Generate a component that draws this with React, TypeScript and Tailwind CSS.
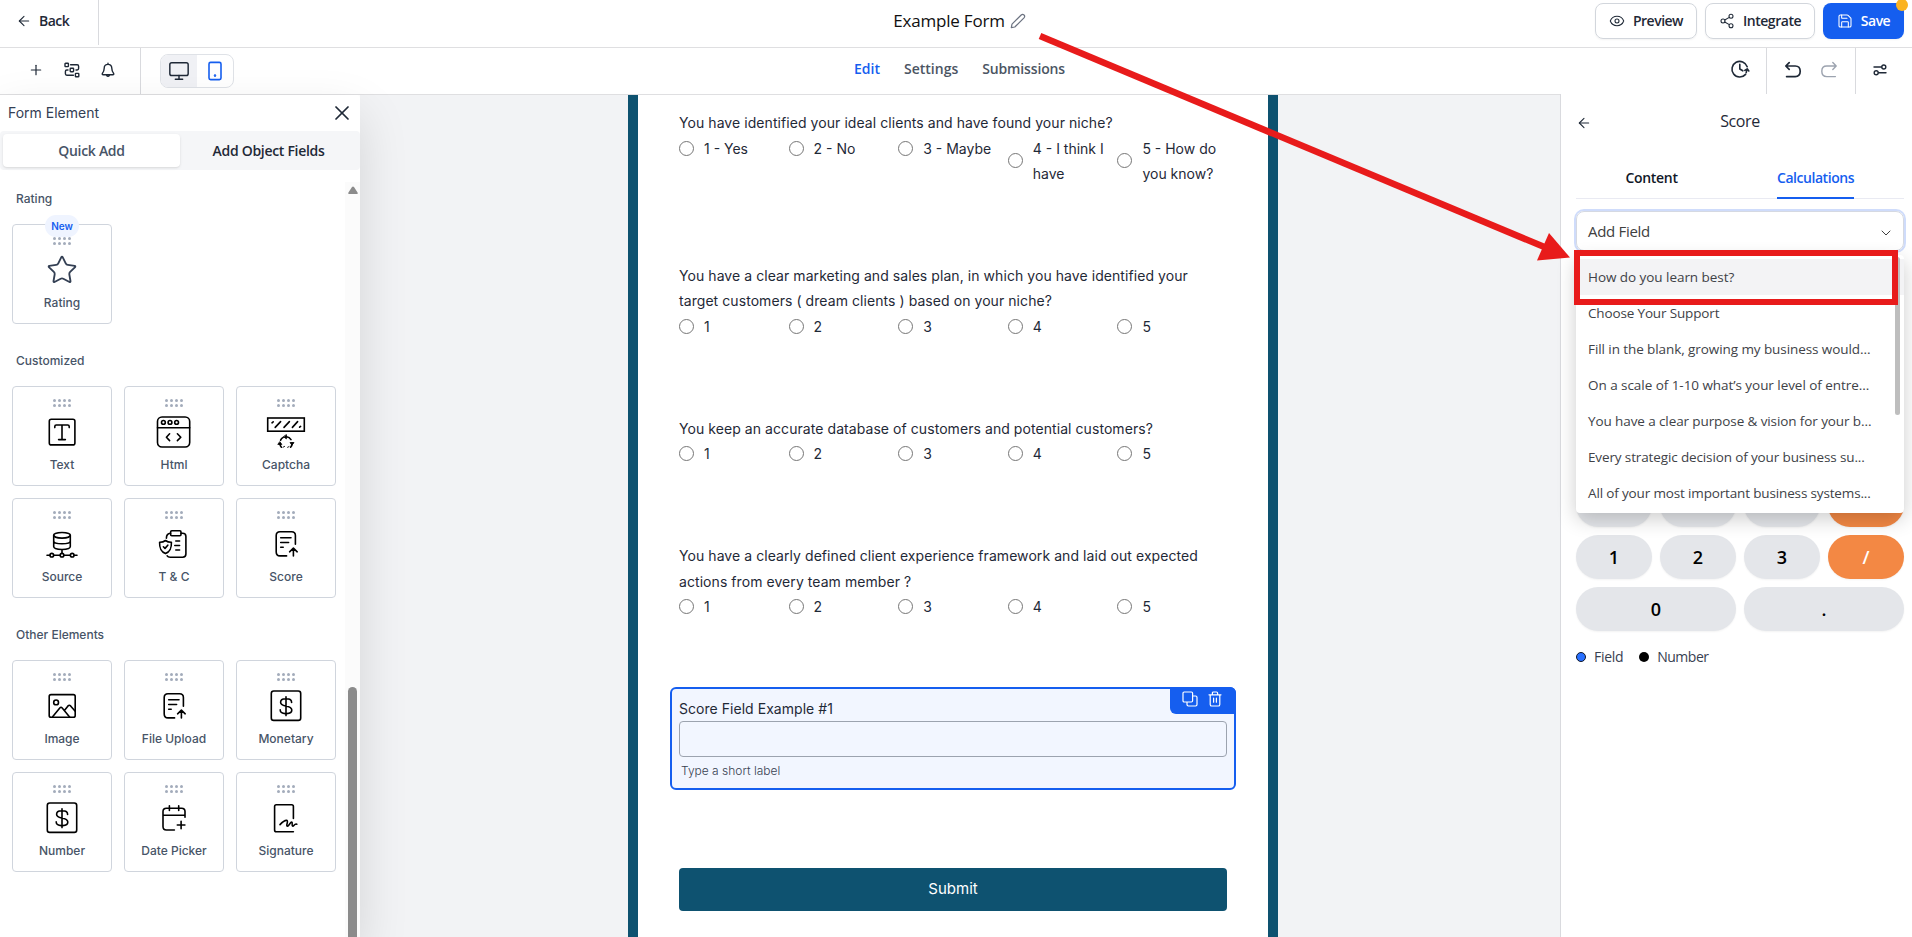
import React from 'react';
import { ArrowLeft, Eye, Monitor, Plus, Save, Share2, Star, X, ChevronDown } from 'lucide-react';

interface ElementItem {
	label: string;
	icon: React.ReactNode;
	isNew?: boolean;
}

// Shared frame for the 40x40 tile drawings
const TileIcon: React.FC<{ children: React.ReactNode }> = ({ children }) => (
	<svg
		className="w-10 h-10"
		viewBox="0 0 40 40"
		fill="none"
		stroke="#000"
		strokeWidth="1.6"
		strokeLinecap="round"
		strokeLinejoin="round"
	>
		{children}
	</svg>
);

const TextIcon = () => (
	<TileIcon>
		<rect x="7.3" y="7.3" width="25.6" height="25.6" rx="2" />
		<path d="M12.8 15.6V14.5Q12.8 13 14.3 13H25.7Q27.2 13 27.2 14.5V15.6M20 13V27.6M16.6 27.6H23.4" />
	</TileIcon>
);

const HtmlIcon = () => (
	<TileIcon>
		<rect x="3.5" y="5" width="32.2" height="30" rx="4.5" />
		<path d="M3.5 15.8H35.7M15.6 21.8L12.4 25.2L15.6 28.6M23.4 21.8L26.8 25.2L23.4 28.6" />
		<circle cx="9.4" cy="10.4" r="1.9" />
		<circle cx="16" cy="10.4" r="1.9" />
		<circle cx="22.6" cy="10.4" r="1.9" />
	</TileIcon>
);

const CaptchaIcon = () => (
	<TileIcon>
		<rect x="1.7" y="6" width="36.6" height="13.2" strokeLinejoin="miter" />
		<path d="M6 10.8L7.2 9.8M9.2 15.4L14.6 9.6M18 15.4L23.4 9.6M26.4 15.4L31.6 9.6M33.6 15.2L34.6 14.4" />
		<path d="M14.6 28.2A6 6 0 0 1 17.2 25.4M20.6 24.8A6 6 0 0 1 25 27.6M26.2 31.2A6 6 0 0 1 24.6 35.2M15.4 35.2A6 6 0 0 1 13.9 31.6" />
		<path d="M20.4 23V26.8L17.8 24.9ZM24.4 30.6H28L26.2 32.8ZM12.2 32.4H15.8L14 30ZM17 35.2L18.6 34.4M21.6 35.3L23 34.6" fill="#000" strokeWidth="0.9" />
	</TileIcon>
);

const SourceIcon = () => (
	<TileIcon>
		<ellipse cx="20" cy="11.3" rx="8.3" ry="2.8" />
		<path d="M11.7 11.3V22.6C11.7 24.3 15.4 25.5 20 25.5S28.3 24.3 28.3 22.6V11.3M11.7 17C11.7 18.7 15.4 19.8 20 19.8S28.3 18.7 28.3 17M20 25.5V29M5 31.2H7.8M11.8 31.2H18M22 31.2H28.2M32.2 31.2H35" />
		<circle cx="9.8" cy="31.2" r="1.8" />
		<circle cx="20" cy="31.2" r="1.8" />
		<circle cx="30.2" cy="31.2" r="1.8" />
	</TileIcon>
);

const TermsIcon = () => (
	<TileIcon>
		<rect x="16.6" y="6.8" width="10.4" height="5" rx="1.2" />
		<path d="M27 9.3H28.6Q31.9 9.3 31.9 12.5V30Q31.9 33.2 28.6 33.2H16.2Q14 33.2 13.2 31.8M16.6 9.3Q12.4 9.6 12.4 14.2" />
		<path d="M11.5 16.5Q14 18.3 17.4 18.2C17.6 23.5 16.8 27.2 11.5 29.6C6.2 27.2 5.4 23.5 5.6 18.2Q9 18.3 11.5 16.5Z" />
		<path d="M9.4 22.8L11 24.4L13.8 21.2M21.8 17H25.6M20.8 21.5H25.6M21.8 26H25.6" />
	</TileIcon>
);

const DocUploadIcon = () => (
	<TileIcon>
		<path d="M29.4 20.2V11.6Q29.4 7.8 25.6 7.8H14Q10.2 7.8 10.2 11.6V28Q10.2 31.9 14 31.9H20.6" />
		<path d="M14.7 13.8H25M14.7 18.5H22.6M14.7 23.3H17.2M27.4 32V24.6M23.6 27.8L27.4 24.2L31.2 27.8" />
	</TileIcon>
);

const ImageIcon = () => (
	<TileIcon>
		<rect x="7.2" y="8.6" width="26" height="22.6" rx="1.8" />
		<circle cx="14.1" cy="16.4" r="2.4" />
		<path d="M10.6 30.8L17.8 22Q19 20.6 20.2 22L27.6 31M22.8 24L26 19.9Q27.3 18.6 28.6 19.9L33 25" />
	</TileIcon>
);

const DollarIcon = () => (
	<TileIcon>
		<rect x="5.3" y="5" width="29.4" height="29.4" rx="2.4" />
		<path d="M20 10.8V29.6M25.6 16.4C25.6 13.9 23.4 12.8 20.6 12.8H19.4C16.6 12.8 14.6 14.2 14.6 16.3C14.6 18.6 16.6 19.4 19.6 20C23.2 20.7 25.8 21.4 25.8 24C25.8 26.2 23.6 27.6 20.8 27.6H19.2C16.4 27.6 14.2 26.4 14.2 23.9" />
	</TileIcon>
);

const DateIcon = () => (
	<TileIcon>
		<path d="M31 19.2V13.6Q31 10.2 27.6 10.2H12.4Q9 10.2 9 13.6V28.6Q9 32 12.4 32H20.4M9 17.3H31M15.4 7.8V12.4M24.7 7.8V12.4M27.1 23.2V30.8M23.3 27H30.9" />
	</TileIcon>
);

const SignatureIcon = () => (
	<TileIcon>
		<path d="M27.4 20.4V8.4Q27.4 6.7 25.7 6.7H10.3Q8.6 6.7 8.6 8.4V32Q8.6 33.8 10.3 33.8H27.4" />
		<path d="M14 26.6C16 24.4 19 22 21 22.4C22.6 23 19.6 28 21.4 28.2C23 28.2 24.4 23.6 25.8 24C27 24.4 25.2 27.8 26.8 28.2C28 28.2 28.6 25.2 30.8 26.2" />
	</TileIcon>
);

const sections: { title: string; items: ElementItem[] }[] = [
	{
		title: 'Rating',
		items: [
			{
				label: 'Rating',
				icon: <Star className="w-10 h-10 p-[4px] text-[#344054]" strokeWidth={1.4} />,
				isNew: true,
			},
		],
	},
	{
		title: 'Customized',
		items: [
			{ label: 'Text', icon: <TextIcon /> },
			{ label: 'Html', icon: <HtmlIcon /> },
			{ label: 'Captcha', icon: <CaptchaIcon /> },
			{ label: 'Source', icon: <SourceIcon /> },
			{ label: 'T & C', icon: <TermsIcon /> },
			{ label: 'Score', icon: <DocUploadIcon /> },
		],
	},
	{
		title: 'Other Elements',
		items: [
			{ label: 'Image', icon: <ImageIcon /> },
			{ label: 'File Upload', icon: <DocUploadIcon /> },
			{ label: 'Monetary', icon: <DollarIcon /> },
			{ label: 'Number', icon: <DollarIcon /> },
			{ label: 'Date Picker', icon: <DateIcon /> },
			{ label: 'Signature', icon: <SignatureIcon /> },
		],
	},
];

const questions = [
	{
		text: 'You have identified your ideal clients and have found your niche?',
		options: ['1 - Yes', '2 - No', '3 - Maybe', '4 - I think I have', '5 - How do you know?'],
	},
	{
		text: 'You have a clear marketing and sales plan, in which you have identified your target customers ( dream clients ) based on your niche?',
		options: ['1', '2', '3', '4', '5'],
	},
	{
		text: 'You keep an accurate database of customers and potential customers?',
		options: ['1', '2', '3', '4', '5'],
	},
	{
		text: 'You have a clearly defined client experience framework and laid out expected actions from every team member ?',
		options: ['1', '2', '3', '4', '5'],
	},
];

const fieldOptions = [
	{ text: 'How do you learn best?', tracking: 'tracking-[-0.05px]' },
	{ text: 'Choose Your Support', tracking: 'tracking-[-0.15px]' },
	{ text: 'Fill in the blank, growing my business would...', tracking: 'tracking-[-0.08px]' },
	{ text: 'On a scale of 1-10 what’s your level of entre...', tracking: 'tracking-[-0.05px]' },
	{ text: 'You have a clear purpose & vision for your b...', tracking: 'tracking-[-0.1px]' },
	{ text: 'Every strategic decision of your business su...', tracking: 'tracking-[-0.13px]' },
	{ text: 'All of your most important business systems...', tracking: 'tracking-[-0.15px]' },
];

const Header = () => (
	<header className="shrink-0">
		<div className="h-12 flex border-b border-[#dfdfe1]">
			<div className="w-[636px] flex items-start">
				<div className="w-[99px] h-[45px] border-r border-[#d9dade] flex items-center pl-4 pb-[4px] text-[#1f2937]">
					<ArrowLeft className="w-4 h-4" strokeWidth={1.6} />
					<span className="ml-[7px] text-sm font-semibold tracking-[-0.5px]">Back</span>
				</div>
			</div>
			<div className="flex-1 flex items-center justify-center pl-[7px] pb-[5px]">
				<h1 className="text-[17px] text-[#101010] tracking-[-0.2px]">Example Form</h1>
				<svg className="w-4 h-4 ml-[5px]" viewBox="0 0 16 16" fill="none" stroke="#6b7280" strokeWidth="1.2" strokeLinejoin="round">
					<path d="M1.3 14.7L2 11.2L11.2 2Q12.6 .8 14 2T14 4.8L4.8 14L1.3 14.7Z" />
				</svg>
			</div>
			<div className="w-[636px] flex justify-end gap-2 pt-[3px] pr-2 text-sm font-semibold text-[#1f2937]">
				<button className="w-[102px] h-9 rounded-lg border border-[#d2d6dc] shadow-xs flex items-center justify-center gap-2">
					<Eye className="w-4 h-4" strokeWidth={1.6} />
					<span className="tracking-[-0.5px]">Preview</span>
				</button>
				<button className="w-[110px] h-9 rounded-lg border border-[#d2d6dc] shadow-xs flex items-center justify-center gap-2">
					<Share2 className="w-4 h-4" strokeWidth={1.6} />
					<span className="tracking-[-0.45px]">Integrate</span>
				</button>
				<button className="relative w-[81px] h-9 rounded-lg bg-[#155eef] text-white shadow-xs flex items-center justify-center gap-2">
					<Save className="w-4 h-4" strokeWidth={1.6} />
					<span className="tracking-[-0.5px]">Save</span>
					<span className="absolute -top-1 -right-[4px] w-3 h-3 rounded-full bg-[#fbb321]"></span>
				</button>
			</div>
		</div>

		<div className="h-[47px] flex border-b border-[#dfdfe1] text-[#1f2937]">
			<div className="w-[141px] border-r border-[#d9dade] flex items-center pl-7 pb-[2px]">
				<Plus className="w-4 h-4" strokeWidth={1.8} />
				<svg className="w-4 h-4 ml-5" viewBox="0 0 16 16" fill="none" stroke="currentColor" strokeWidth="1.4">
					<rect x="1" y="1.2" width="3.4" height="3.4" rx=".6" />
					<rect x="6.2" y="6.3" width="3.4" height="3.4" rx=".6" />
					<rect x="11.4" y="11.4" width="3.4" height="3.4" rx=".6" />
					<path d="M6.6 2.8H13.2Q14.6 2.8 14.6 4.2V6.6Q14.6 8 13.2 8H12M9.4 13.2H2.8Q1.4 13.2 1.4 11.8V9.4Q1.4 8 2.8 8H4" strokeLinecap="round" />
				</svg>
				<svg className="w-4 h-4 ml-5" viewBox="0 0 16 16" fill="none" stroke="currentColor" strokeWidth="1.4" strokeLinecap="round" strokeLinejoin="round">
					<path d="M8 2.4C5.4 2.4 4.2 4.2 4.2 6.2C4.2 8.6 3.4 10 2.4 11.4Q1.8 12.8 3.2 12.8H12.8Q14.2 12.8 13.6 11.4C12.6 10 11.8 8.6 11.8 6.2C11.8 4.2 10.6 2.4 8 2.4ZM8 2.3V1.2M6.4 13.2Q8 15.6 9.6 13.2" />
				</svg>
			</div>
			<div className="w-[495px] flex items-start pl-[19px] pt-[6px]">
				<div className="w-[74px] h-[34px] rounded-lg border border-[#dfe2e7] flex overflow-hidden">
					<div className="w-9 bg-[#f0f1f5] flex items-center justify-center">
						<Monitor className="w-[22px] h-[22px]" strokeWidth={1.6} />
					</div>
					<div className="flex-1 flex items-center justify-center text-[#155eef]">
						<svg className="w-5 h-5" viewBox="0 0 20 20" fill="none" stroke="currentColor" strokeWidth="1.6">
							<rect x="4" y="1.4" width="12" height="17.2" rx="1.6" />
							<circle cx="10" cy="14.6" r=".5" fill="currentColor" />
						</svg>
					</div>
				</div>
			</div>
			<nav className="flex-1 flex items-center justify-center gap-6 pb-[4px] pl-[7px] text-sm font-semibold text-[#4b5563]">
				<span className="text-[#155eef]">Edit</span>
				<span>Settings</span>
				<span className="tracking-[-0.15px]">Submissions</span>
			</nav>
			<div className="w-[636px] h-[46px] flex justify-end">
				<div className="w-[36px] h-full flex items-center pb-1">
					<svg className="w-5 h-5" viewBox="0 0 20 20" fill="none" stroke="currentColor" strokeWidth="1.6" strokeLinecap="round" strokeLinejoin="round">
						<path d="M17.2 7.8A7.8 7.8 0 1 0 15.6 15.4M9.8 5.4V10L12.8 11.8M14.8 11.4L17.2 9.8L18.8 12M17 10L16.2 13.6" />
					</svg>
				</div>
				<div className="w-[89px] h-full border-l border-[#d9dade] flex items-center pl-[17px] gap-[18px] pb-[3px]">
					<svg className="w-[18px] h-[18px]" viewBox="0 0 18 18" fill="none" stroke="currentColor" strokeWidth="1.7" strokeLinecap="round" strokeLinejoin="round">
						<path d="M5.2 1.6L1.8 5L5.2 8.4M2 5H11.2Q16.2 5 16.2 10.2T11.2 15.6H2.6" />
					</svg>
					<svg className="w-[18px] h-[18px]" viewBox="0 0 18 18" fill="none" stroke="#9ca3af" strokeWidth="1.4" strokeLinecap="round" strokeLinejoin="round">
						<path d="M12.8 1.6L16.2 5L12.8 8.4M16 5H6.8Q1.8 5 1.8 10.2T6.8 15.6H15.4" />
					</svg>
				</div>
				<div className="w-[57px] h-full border-l border-[#d9dade] flex items-center pl-[16px] pb-[2px]">
					<svg className="w-4 h-4" viewBox="0 0 16 16" fill="none" stroke="currentColor" strokeWidth="1.4" strokeLinecap="round">
						<path d="M2 5H9.6M6.6 10.8H14" />
						<circle cx="11.8" cy="5" r="2" />
						<circle cx="4.2" cy="10.8" r="2" />
					</svg>
				</div>
			</div>
		</div>
	</header>
);

const ElementTile: React.FC<{ item: ElementItem }> = ({ item }) => (
	<div className="relative w-[100px] h-[100px] rounded border border-[#d0d5dd] flex flex-col items-center">
		{item.isNew && (
			<span className="absolute -top-[10px] left-1/2 -translate-x-1/2 w-[34px] h-[22px] rounded-full bg-[#eff4ff] text-[#155eef] text-[10px] font-semibold flex items-center justify-center">
				New
			</span>
		)}
		<div className="mt-[12px] grid grid-cols-4 gap-x-[2px] gap-y-[2px]">
			{Array.from({ length: 8 }, (_, i) => (
				<span key={i} className="w-[3px] h-[3px] rounded-full bg-[#a3acbb]"></span>
			))}
		</div>
		<div className="mt-[5px]">{item.icon}</div>
		<span className="mt-[5px] text-xs font-medium leading-4 text-[#475467]">{item.label}</span>
	</div>
);

const ElementPanel = () => (
	<aside className="relative z-10 w-[360px] shrink-0 bg-white rounded-tr shadow-[0_20px_50px_rgba(0,0,0,0.13)] flex flex-col font-['Inter',sans-serif]">
		<div className="h-9 shrink-0 flex items-center justify-between pl-2 pr-[6px]">
			<span className="text-sm text-[#344054]">Form Element</span>
			<X className="w-6 h-6 text-[#1f2937]" strokeWidth={1.7} />
		</div>
		<div className="h-[39px] shrink-0 bg-[#f5f6f8] rounded flex items-center pl-[3px] text-sm font-semibold font-['Open_Sans','Noto_Sans',sans-serif]">
			<div className="w-[177px] h-[33px] rounded bg-white shadow-sm flex items-center justify-center text-[#475467] tracking-[-0.3px]">
				Quick Add
			</div>
			<div className="flex-1 pr-[3px] text-center text-[#1f2937] tracking-[-0.3px]">Add Object Fields</div>
		</div>
		<div className="flex-1 min-h-0 flex mt-3">
			<div className="flex-1 overflow-hidden pl-3 pt-[9px]">
				{sections.map((section) => (
					<section key={section.title} className="mb-[29px]">
						<h2 className="pl-1 text-xs font-medium leading-4 text-[#475467]">{section.title}</h2>
						<div className="mt-[17px] grid grid-cols-[100px_100px_100px] gap-3">
							{section.items.map((item) => (
								<ElementTile key={item.label} item={item} />
							))}
						</div>
					</section>
				))}
			</div>
			<div className="w-[15px] bg-[#fbfbfb] flex flex-col items-center pt-[4px]">
				<svg className="w-[10px] h-2" viewBox="0 0 10 8" fill="#8b8b8b">
					<path d="M.8 8Q-.2 7.4 .6 6.2L4 1Q5 -.2 6 1L9.4 6.2Q10.2 7.4 9.2 8Z" />
				</svg>
				<div className="mt-[493px] w-[9px] flex-1 rounded-t-full bg-[#8b8b8b]"></div>
			</div>
		</div>
	</aside>
);

const FormCanvas = () => (
	<main className="flex-1 bg-[#f2f3f5] flex justify-center pr-[14px] font-['Inter',sans-serif] text-[#1f2937]">
		<div className="w-[650px] bg-white border-x-10 border-[#0e5270] px-[41px] pt-[15.4px]">
			{questions.map((q) => (
				<div key={q.text} className="mb-[77.1px] text-sm leading-[25.2px]">
					<p className="tracking-[0.065px]">{q.text}</p>
					<div className="grid grid-cols-5">
						{q.options.map((option) => (
							<label key={option} className="flex items-center self-start">
								<span className="w-[15px] h-[15px] shrink-0 rounded-full border border-[#767676]"></span>
								<span className="ml-[10px]">{option}</span>
							</label>
						))}
					</div>
				</div>
			))}

			<div className="relative -mt-[9px] -mx-[9px] h-[103px] rounded-md border-2 border-[#155eef] bg-[#f2f6ff] px-[7px] pt-[10px]">
				<p className="text-sm leading-5 tracking-[0.04px]">Score Field Example #1</p>
				<div className="mt-[2px] h-9 rounded border border-[#9ca3af]"></div>
				<p className="mt-[6px] pl-[2px] text-xs font-light leading-4 text-[#374151]">Type a short label</p>
				<div className="absolute -top-[2px] -right-[2px] w-[66px] h-[27px] rounded-tr-md rounded-bl-md bg-[#155eef] flex items-start pt-1 pl-3 gap-[9px]">
					<svg className="w-4 h-4" viewBox="0 0 16 16" fill="none" stroke="#fff" strokeWidth="1.2" strokeLinejoin="round">
						<rect x="1" y="1" width="9.6" height="10" rx="1.2" />
						<path d="M5 11V13.6Q5 15 6.4 15H13.6Q15 15 15 13.6V6.4Q15 5 13.6 5H10.6" />
					</svg>
					<svg className="w-4 h-4" viewBox="0 0 16 16" fill="none" stroke="#fff" strokeWidth="1.2" strokeLinecap="round" strokeLinejoin="round">
						<path d="M2 3.8H14M5.4 3.6V2Q5.4 1 6.4 1H9.6Q10.6 1 10.6 2V3.6M3.2 4V13.4Q3.2 15 4.8 15H11.2Q12.8 15 12.8 13.4V4M6.6 7.2V11.2M9.4 7.2V11.2" />
					</svg>
				</div>
			</div>

			<button className="mt-[78px] w-full h-[43px] rounded bg-[#0e5270] text-[15px] text-white">Submit</button>
		</div>
	</main>
);

const keyClass = 'h-11 rounded-full bg-[#e4e6ea] shadow-xs flex items-center justify-center';

const ScorePanel = () => (
	<aside className="relative w-[352px] shrink-0 -mt-px pt-px bg-white border-l border-[#d9dade] px-[15px] pr-2">
		<div className="h-[57px] flex items-center text-[#1f2937]">
			<ArrowLeft className="w-4 h-4 mb-[2px]" strokeWidth={1.6} />
			<h2 className="flex-1 text-center pr-4 pb-[5px] text-base tracking-[-0.4px]">Score</h2>
		</div>
		<div className="h-[47px] flex border-b border-[#e9eaf2] text-sm font-semibold">
			<div className="w-[151px] flex justify-center items-end pb-[10px] text-[#111827] tracking-[-0.3px]">Content</div>
			<div className="flex-1 flex justify-center">
				<div className="-mb-px w-[77px] flex justify-center items-end pb-[9px] border-b-2 border-[#155eef] text-[#155eef] tracking-[-0.45px]">
					Calculations
				</div>
			</div>
		</div>

		<div className="relative mt-3">
			<div className="h-10 rounded-lg border border-[#d5d9e2] ring-2 ring-[#cfdcfb] flex items-center justify-between pl-[11px] pr-[9px] text-[#404040]">
				<span className="text-[15px] tracking-[-0.3px]">Add Field</span>
				<ChevronDown className="w-4 h-4 mt-1" strokeWidth={1.5} />
			</div>

			{/* Options list */}
			<div className="absolute z-10 top-[44px] left-0 w-full h-[258px] rounded bg-white shadow-[0_6px_20px_rgba(0,0,0,0.2)] pt-1 overflow-hidden">
				{fieldOptions.map((option, i) => (
					<div
						key={option.text}
						className={
							i === 0
								? 'h-9 flex items-center pl-3 pr-8 bg-[#f3f3f5] text-[13.5px] text-[#404247] whitespace-nowrap'
								: 'h-9 flex items-center pl-3 pr-8 text-[13.5px] text-[#404247] whitespace-nowrap'
						}
					>
						<span className={option.tracking}>{option.text}</span>
					</div>
				))}
				<div className="absolute top-[2px] right-1 w-[5px] h-[158px] rounded-full bg-[#bebebe]"></div>
			</div>

			{/* Highlight around the first option */}
			<div className="absolute z-20 top-[39px] -left-[2px] w-[324px] h-[55px] border-6 border-[#e81b1b]"></div>
		</div>

		<div className="mt-[232px] grid grid-cols-4 gap-2 text-lg font-semibold text-black">
			{/* Row tucked under the open list */}
			<div className={keyClass}></div>
			<div className={keyClass}></div>
			<div className={keyClass}></div>
			<div className="h-11 rounded-full bg-[#f38844] shadow-xs"></div>
			<div className={keyClass}>1</div>
			<div className={keyClass}>2</div>
			<div className={keyClass}>3</div>
			<div className="h-11 rounded-full bg-[#f38844] text-white shadow-xs flex items-center justify-center">/</div>
			<div className="col-span-2 h-11 rounded-full bg-[#e4e6ea] shadow-xs flex items-center justify-center">0</div>
			<div className="col-span-2 h-11 rounded-full bg-[#e4e6ea] shadow-xs flex items-center justify-center">.</div>
		</div>

		<div className="mt-4 flex items-center text-sm text-[#374151]">
			<span className="w-[10px] h-[10px] rounded-full bg-[#2970ff] border border-[#111827]"></span>
			<span className="ml-2 tracking-[-0.3px]">Field</span>
			<span className="ml-4 w-[10px] h-[10px] rounded-full bg-black"></span>
			<span className="ml-2 tracking-[-0.5px]">Number</span>
		</div>
	</aside>
);

const App: React.FC = () => (
	<div className="relative w-[1912px] h-[937px] overflow-hidden bg-white flex flex-col font-['Open_Sans','Noto_Sans',sans-serif]">
		<Header />
		<div className="flex-1 min-h-0 flex">
			<ElementPanel />
			<FormCanvas />
			<ScorePanel />
		</div>

		{/* Callout arrow from the form title to the field list */}
		<svg className="absolute inset-0 z-30 w-full h-full pointer-events-none" viewBox="0 0 1912 937">
			<path d="M1040 36L1545 247.3" stroke="#e81b1b" strokeWidth="6.6" />
			<path d="M1570 257.5L1537 260.5L1549 233Z" fill="#e81b1b" />
		</svg>
	</div>
);

export default App;
